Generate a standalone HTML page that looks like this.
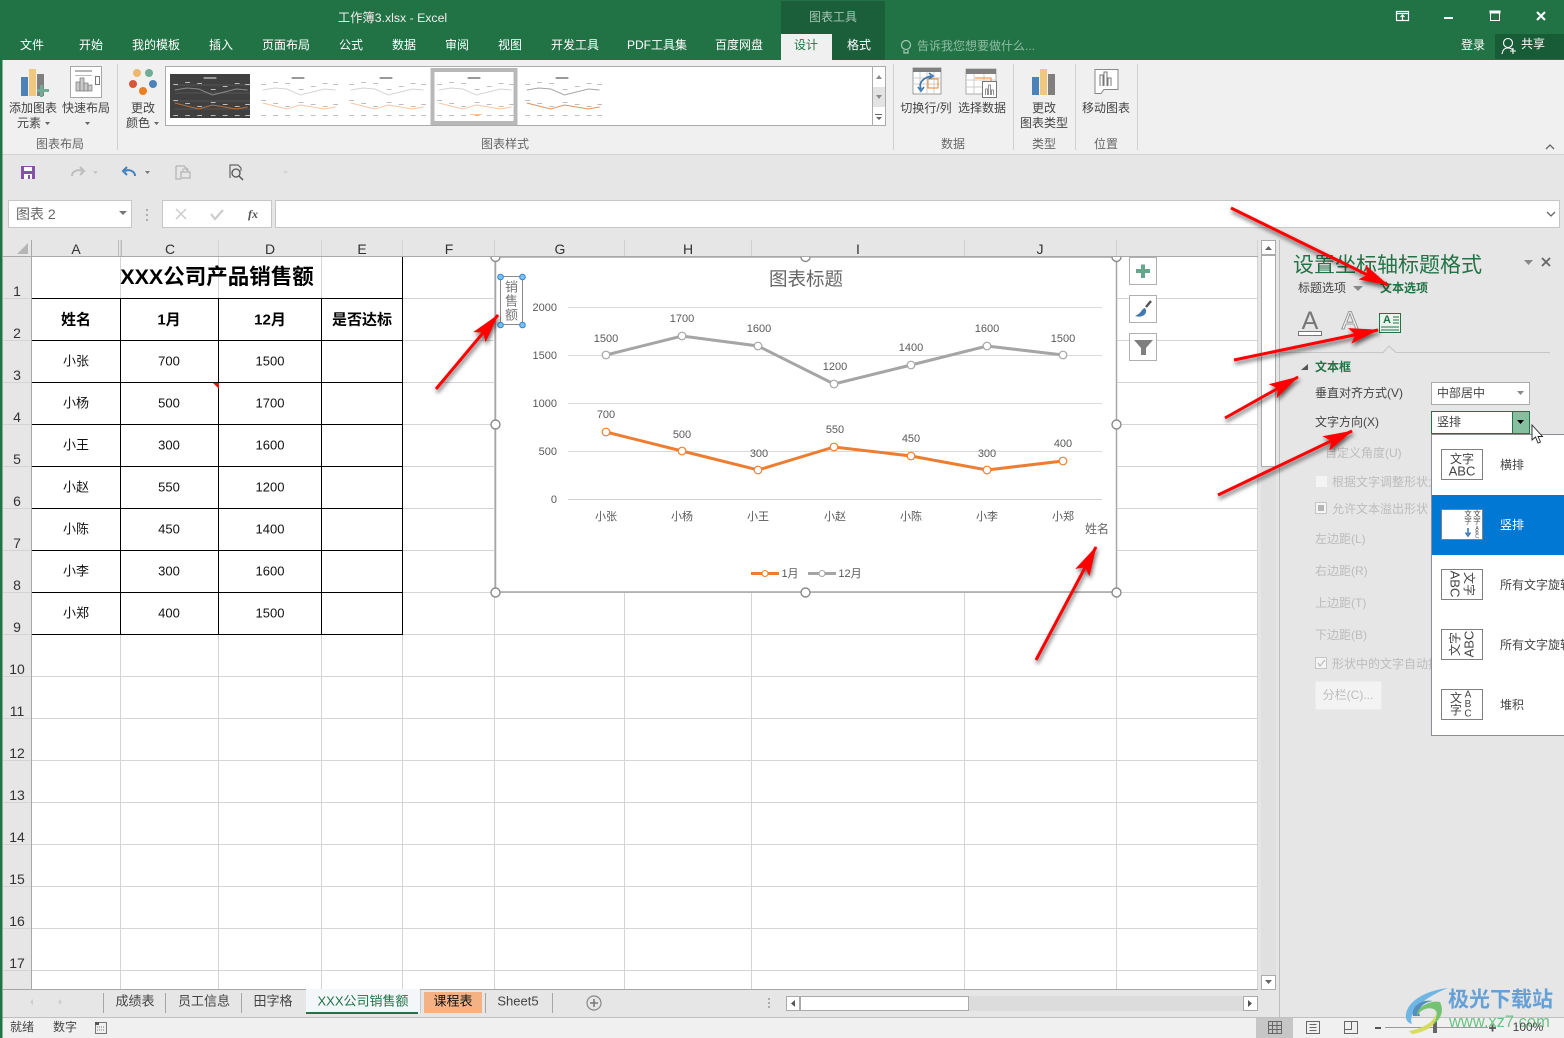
<!DOCTYPE html>
<html lang="zh"><head><meta charset="utf-8"><title>工作簿3.xlsx - Excel</title>
<style>
html,body{margin:0;padding:0;width:1564px;height:1038px;overflow:hidden;background:#fff}
svg{position:absolute;left:0;top:0;font-family:"Liberation Sans","Noto Sans CJK SC",sans-serif;font-size:12px}
text{dominant-baseline:central}
.m{text-anchor:middle}
.e{text-anchor:end}
.w{fill:#fff}
.g{fill:#444}
.l{fill:#666}
.d{fill:#bcbcbc}
.k{fill:#000}
.c{fill:#595959;font-size:11px;transform:translateY(1px)}
.h{fill:#333;font-size:14px}
.b{font-weight:bold;font-size:15px;fill:#000}
.v{font-size:13px;fill:#111}
.gl{stroke:#d4d4d4;stroke-width:1}
.bl{stroke:#000;stroke-width:1;fill:none}
.ic{fill:none;stroke:#7f7f7f}
</style></head><body>
<svg width="1564" height="1038" viewBox="0 0 1564 1038" shape-rendering="geometricPrecision">
<defs>
<marker id="ah" viewBox="0 0 30 16" markerUnits="userSpaceOnUse" markerWidth="30" markerHeight="16" refX="29" refY="8" orient="auto"><path d="M0,0L30,8L0,16L6,8Z" fill="#f00"/></marker>
<filter id="sh" x="-20%" y="-20%" width="140%" height="140%"><feDropShadow dx="1" dy="3" stdDeviation="2" flood-color="#000" flood-opacity=".6"/></filter>
<g id="marks" fill="#bdbdbd">
<rect x="4" y="16" width="6" height="1"/><rect x="19" y="14" width="6" height="1"/><rect x="34" y="15" width="6" height="1"/><rect x="51" y="21" width="6" height="1"/><rect x="66" y="18" width="6" height="1"/><rect x="81" y="15" width="6" height="1"/><rect x="94" y="16" width="6" height="1"/>
<rect x="4" y="32" width="6" height="1"/><rect x="19" y="35" width="6" height="1"/><rect x="34" y="38" width="6" height="1"/><rect x="51" y="34" width="6" height="1"/><rect x="66" y="36" width="6" height="1"/><rect x="81" y="38" width="6" height="1"/><rect x="94" y="36" width="6" height="1"/>
<rect x="4" y="47" width="6" height="1"/><rect x="19" y="47" width="6" height="1"/><rect x="34" y="47" width="6" height="1"/><rect x="51" y="47" width="6" height="1"/><rect x="66" y="47" width="6" height="1"/><rect x="81" y="47" width="6" height="1"/><rect x="94" y="47" width="6" height="1"/>
<rect x="42" y="9" width="16" height="2" fill="#999"/>
</g>
<g id="mini"><polyline points="6,22 21,20 36,21 53,27 68,24 83,21 97,22" fill="none" stroke="#d4d4d4" stroke-width="1"/><polyline points="6,35 21,38 36,41 53,37 68,39 83,41 97,39" fill="none" stroke="#f6c6a4" stroke-width="1"/><use href="#marks"/></g>
</defs>

<!-- backgrounds -->
<rect width="1564" height="1038" fill="#e6e6e6"/>
<rect width="1564" height="60" fill="#217346"/>
<rect x="0" y="60" width="1564" height="94" fill="#f0f0f0"/>
<rect x="0" y="154" width="1564" height="1" fill="#d2d2d2"/>
<rect x="781" y="1" width="104" height="59" fill="#1b5e3a"/>
<rect x="781" y="34" width="51" height="26" fill="#f0f0f0"/>
<rect x="1495" y="34" width="69" height="25" fill="#185c37"/>

<!-- title & tabs -->
<text x="392.500" y="18" class="m" fill="#f0f0f0" style="font-size:12.300px">工作簿3.xlsx - Excel</text>
<text x="833" y="17" class="m" fill="#a5c8b4">图表工具</text>
<g class="w" fill="#fff">
<text x="32" y="45" class="m w">文件</text><text x="91" y="45" class="m w">开始</text><text x="156" y="45" class="m w">我的模板</text><text x="221" y="45" class="m w">插入</text><text x="286" y="45" class="m w">页面布局</text><text x="351" y="45" class="m w">公式</text><text x="404" y="45" class="m w">数据</text><text x="457" y="45" class="m w">审阅</text><text x="510" y="45" class="m w">视图</text><text x="575" y="45" class="m w">开发工具</text><text x="657" y="45" class="m w">PDF工具集</text><text x="739" y="45" class="m w">百度网盘</text><text x="859" y="45" class="m w">格式</text><text x="1473" y="45" class="m w">登录</text><text x="1533" y="44" class="m w">共享</text>
</g>
<text x="806" y="45" class="m" fill="#217346">设计</text>
<text x="917" y="46" fill="#8fbca3">告诉我您想要做什么...</text>
<g fill="none" stroke="#a5c8b4" stroke-width="1.200"><circle cx="906" cy="45" r="4.500"/><path d="M904,50V53H908V50"/></g>
<!-- window buttons -->
<g fill="none" stroke="#fff" stroke-width="1.200"><rect x="1396.500" y="11.500" width="12" height="9"/><path d="M1396,13.500H1409M1402.500,20V15M1400.500,17L1402.500,15L1404.500,17"/></g>
<rect x="1444" y="17" width="9" height="2" fill="#fff"/>
<g fill="none" stroke="#fff"><rect x="1490.500" y="11.500" width="9" height="9"/><rect x="1490" y="11" width="10" height="2" fill="#fff"/></g>
<path d="M1537,12L1545,20M1545,12L1537,20" stroke="#fff" stroke-width="2"/>
<g fill="none" stroke="#fff" stroke-width="1.100"><circle cx="1508" cy="43" r="4.500"/><path d="M1502,54C1503,49 1505,48 1508,48C1510,48 1512,49 1513,50M1510,51H1516M1513,48V54"/></g>

<!-- ribbon: layout group -->
<rect x="21" y="77" width="7" height="19" fill="#4d82b8"/><rect x="29" y="69" width="7" height="27" fill="#f0c77e"/><rect x="37" y="74" width="7" height="22" fill="#7f7f7f"/>
<path d="M40,85H43V89H49V92H43V97H40V92H37V89H40Z" fill="#70ad97"/>
<rect x="70.500" y="66.500" width="31" height="31" fill="#fff" stroke="#a8a8a8"/>
<rect x="75" y="70" width="17" height="2" fill="#b5b5b5"/><rect x="75" y="75" width="17" height="1" fill="#bbb"/><g fill="#c9c9c9" stroke="#777" stroke-width=".7"><rect x="76" y="82" width="4" height="9"/><rect x="80" y="78" width="4" height="13"/><rect x="84" y="83" width="4" height="8"/><rect x="88" y="85" width="4" height="6"/></g><rect x="95.500" y="76.500" width="4" height="8" fill="none" stroke="#777"/>
<text x="33" y="108" class="m g">添加图表</text><text x="29" y="123" class="m g">元素</text><path d="M45,122h5l-2.500,3z" fill="#666"/>
<text x="86" y="108" class="m g">快速布局</text><path d="M85,122h5l-2.500,3z" fill="#666"/>
<text x="60" y="144" class="m l">图表布局</text>
<rect x="117" y="64" width="1" height="86" fill="#d0d0d0"/>
<circle cx="137" cy="73" r="4" fill="#eeb76b"/><circle cx="149" cy="73" r="4" fill="#70ad97"/><circle cx="133" cy="84" r="4" fill="#d9553a"/><circle cx="153" cy="84" r="4" fill="#4d82b8"/><circle cx="143" cy="91" r="4" fill="#e97f22"/>
<text x="143" y="108" class="m g">更改</text><text x="138" y="123" class="m g">颜色</text><path d="M154,122h5l-2.500,3z" fill="#666"/>

<!-- gallery -->
<rect x="165.500" y="66.500" width="720" height="59" fill="#fff" stroke="#ababab"/>
<rect x="170" y="74" width="80" height="44" fill="#404040"/>
<g transform="translate(170,68) scale(.8,1)"><path d="M6,17H100M6,25H100M6,33H100M6,41H100" stroke="#555" fill="none"/><polyline points="6,22 21,20 36,21 53,27 68,24 83,21 97,22" fill="none" stroke="#8a8a8a"/><polyline points="6,35 21,38 36,41 53,37 68,39 83,41 97,39" fill="none" stroke="#b8703c"/><use href="#marks"/></g>
<use href="#mini" transform="translate(258,68) scale(.8,1)"/>
<use href="#mini" transform="translate(346,68) scale(.8,1)"/>
<rect x="432.500" y="70" width="83" height="53" fill="#fff" stroke="#b8b8b8" stroke-width="4"/>
<use href="#mini" transform="translate(434,68) scale(.8,1)"/>
<rect x="470" y="114" width="12" height="1" fill="#f6c6a4"/>
<g transform="translate(522,68) scale(.8,1)"><polyline points="6,22 21,20 36,21 53,27 68,24 83,21 97,22" fill="none" stroke="#a5a5a5"/><polyline points="6,35 21,38 36,41 53,37 68,39 83,41 97,39" fill="none" stroke="#e0915a"/><use href="#marks"/></g>
<rect x="872" y="67" width="1" height="58" fill="#ababab"/>
<rect x="873" y="87" width="12" height="20" fill="#e3e3e3"/>
<path d="M876,79h6l-3,-4zM876,95h6l-3,4z" fill="#8a8a8a"/><path d="M875,114h7v1h-7zM876,117h6l-3,3z" fill="#666"/>
<text x="505" y="144" class="m l">图表样式</text>
<rect x="893" y="64" width="1" height="86" fill="#d0d0d0"/>

<!-- data group -->
<rect x="913" y="68" width="28" height="26" fill="#fff" stroke="#888" stroke-width=".8"/><rect x="913" y="68" width="28" height="4" fill="#7f7f7f"/>
<path d="M920,72V94M927,72V94M934,72V94M913,78H941M913,84H941" stroke="#ccc" fill="none"/><rect x="928" y="79" width="10" height="9" fill="none" stroke="#e9852a"/>
<path d="M921,89C918,82 924,78 931,76M929,73L933,76L929,79M918,87L921,91L924,87" fill="none" stroke="#3f78b3" stroke-width="1.700"/>
<rect x="966" y="69" width="30" height="25" fill="#fff" stroke="#999" stroke-width=".8"/><rect x="966" y="69" width="30" height="5" fill="#7f7f7f"/>
<path d="M974,74V94M984,74V94M966,80H996M966,87H996" stroke="#ccc" fill="none"/><path d="M975,78H991V86" stroke="#e9852a" fill="none"/>
<rect x="982.500" y="81.500" width="14" height="16" fill="#fff" stroke="#777"/><path d="M985.500,95V89h2V95M988.500,95V85h2V95M991.500,95V90h2V95" fill="none" stroke="#777" stroke-width=".8"/>
<text x="926" y="108" class="m g">切换行/列</text><text x="982" y="108" class="m g">选择数据</text><text x="953" y="144" class="m l">数据</text>
<rect x="1013" y="64" width="1" height="86" fill="#d0d0d0"/>
<rect x="1032" y="77" width="7" height="18" fill="#4d82b8"/><rect x="1040" y="69" width="7" height="26" fill="#f0c77e"/><rect x="1048" y="74" width="7" height="21" fill="#7f7f7f"/>
<text x="1044" y="108" class="m g">更改</text><text x="1044" y="123" class="m g">图表类型</text><text x="1044" y="144" class="m l">类型</text>
<rect x="1075" y="64" width="1" height="86" fill="#d0d0d0"/>
<path d="M1095,69.500H1118V89.500H1104L1101,93.500H1095Z" fill="#fff" stroke="#888"/><path d="M1100,86V75h3V86M1104,86V72h3V86M1108,86V78h3V86" fill="none" stroke="#777"/>
<text x="1106" y="108" class="m g">移动图表</text><text x="1106" y="144" class="m l">位置</text>
<rect x="1137" y="64" width="1" height="86" fill="#d0d0d0"/>
<path d="M1546,149l4,-4l4,4" fill="none" stroke="#666" stroke-width="1.300"/>

<!-- QAT -->
<path d="M21,166H35V179H21Z" fill="#8652a8"/><rect x="24" y="167" width="8" height="4" fill="#fff"/><rect x="24" y="174" width="8" height="5" fill="#fff"/><rect x="28" y="175" width="2" height="4" fill="#8652a8"/>
<path d="M72,176C72,171 78,169 82,171M80,167L84,171L80,175" fill="none" stroke="#bdbdbd" stroke-width="2"/><path d="M93,171h5l-2.500,3z" fill="#c4c4c4"/>
<path d="M135,176C135,171 129,169 125,171M127,167L123,171L127,175" fill="none" stroke="#4080bd" stroke-width="2"/><path d="M145,171h5l-2.500,3z" fill="#777"/>
<path d="M176,166H184L187,169V171M176,166V179H181" fill="none" stroke="#b5b5b5" stroke-width="1.300"/><rect x="181" y="172" width="9" height="6" fill="none" stroke="#b5b5b5" stroke-width="1.300"/><rect x="183" y="169" width="5" height="3" fill="none" stroke="#b5b5b5"/>
<path d="M230,178V165H238L241,168V171" fill="none" stroke="#666" stroke-width="1.200"/><circle cx="236" cy="173" r="4" fill="none" stroke="#555" stroke-width="1.300"/><path d="M239,176L243,180" stroke="#555" stroke-width="1.500"/>
<path d="M283,171h5l-2.500,3z" fill="#d2d2d2"/>

<!-- formula bar -->
<rect x="8.500" y="200.500" width="123" height="27" fill="#fff" stroke="#c6c6c6"/>
<text x="16" y="214" fill="#666" style="font-size:14px">图表 2</text><path d="M119,211h8l-4,4z" fill="#777"/>
<path d="M147,209v2M147,214v2M147,219v2" stroke="#999" stroke-width="1.500"/>
<rect x="162.500" y="200.500" width="109" height="27" fill="#fff" stroke="#c6c6c6"/>
<path d="M176,209L186,219M186,209L176,219" stroke="#ccc" stroke-width="1.500"/><path d="M211,214L215,219L223,210" fill="none" stroke="#ccc" stroke-width="2.200"/>
<text x="253" y="214" class="m" style="font:italic bold 12px 'Liberation Serif',serif;fill:#555">fx</text>
<rect x="275.500" y="200.500" width="1284" height="27" fill="#fff" stroke="#c6c6c6"/><path d="M1547,212l4,4l4,-4" fill="none" stroke="#666" stroke-width="1.300"/>

<!-- sheet -->
<rect x="3" y="240" width="1255" height="17" fill="#e6e6e6"/>
<rect x="3" y="257" width="29" height="733" fill="#e6e6e6"/>
<rect x="32" y="257" width="1226" height="733" fill="#fff"/>
<path d="M28,243V254H17Z" fill="#b5b5b5"/>
<g class="gl">
<path d="M120.500,240V989M218.500,240V989M321.500,240V989M402.500,240V989M494.500,240V989M624.500,240V989M751.500,240V989M964.500,240V989M1116.500,240V989M1257.500,240V989" fill="none"/>
<path d="M3,298.500H1258M3,340.500H1258M3,382.500H1258M3,424.500H1258M3,466.500H1258M3,508.500H1258M3,550.500H1258M3,592.500H1258M3,634.500H1258M3,676.500H1258M3,718.500H1258M3,760.500H1258M3,802.500H1258M3,844.500H1258M3,886.500H1258M3,928.500H1258M3,970.500H1258" fill="none"/>
</g>
<path d="M118.500,240V257M121.500,240V257" stroke="#bbb" fill="none"/>
<path d="M3,256.500H1258M31.500,240V990" stroke="#a8a8a8" fill="none"/>
<g class="h"><text x="76" y="249" class="m h">A</text><text x="170" y="249" class="m h">C</text><text x="270" y="249" class="m h">D</text><text x="362" y="249" class="m h">E</text><text x="449" y="249" class="m h">F</text>
<text x="17" y="291" class="m h">1</text><text x="17" y="333" class="m h">2</text><text x="17" y="375" class="m h">3</text><text x="17" y="417" class="m h">4</text><text x="17" y="459" class="m h">5</text><text x="17" y="501" class="m h">6</text><text x="17" y="543" class="m h">7</text><text x="17" y="585" class="m h">8</text><text x="17" y="627" class="m h">9</text><text x="17" y="669" class="m h">10</text><text x="17" y="711" class="m h">11</text><text x="17" y="753" class="m h">12</text><text x="17" y="795" class="m h">13</text><text x="17" y="837" class="m h">14</text><text x="17" y="879" class="m h">15</text><text x="17" y="921" class="m h">16</text><text x="17" y="963" class="m h">17</text></g>

<!-- table -->
<path class="bl" d="M32,298.500H403M32,340.500H403M32,382.500H403M32,424.500H403M32,466.500H403M32,508.500H403M32,550.500H403M32,592.500H403M32,634.500H403M120.500,299V635M218.500,299V635M321.500,299V635M402.500,257V635"/>
<text x="217" y="277" class="m k" style="font-size:21.500px;font-weight:bold">XXX公司产品销售额</text>
<text x="76" y="320" class="m b">姓名</text><text x="169" y="320" class="m b">1月</text><text x="270" y="320" class="m b">12月</text><text x="362" y="320" class="m b">是否达标</text>
<text x="76" y="361" class="m v">小张</text><text x="169" y="361" class="m v">700</text><text x="270" y="361" class="m v">1500</text>
<text x="76" y="403" class="m v">小杨</text><text x="169" y="403" class="m v">500</text><text x="270" y="403" class="m v">1700</text>
<text x="76" y="445" class="m v">小王</text><text x="169" y="445" class="m v">300</text><text x="270" y="445" class="m v">1600</text>
<text x="76" y="487" class="m v">小赵</text><text x="169" y="487" class="m v">550</text><text x="270" y="487" class="m v">1200</text>
<text x="76" y="529" class="m v">小陈</text><text x="169" y="529" class="m v">450</text><text x="270" y="529" class="m v">1400</text>
<text x="76" y="571" class="m v">小李</text><text x="169" y="571" class="m v">300</text><text x="270" y="571" class="m v">1600</text>
<text x="76" y="613" class="m v">小郑</text><text x="169" y="613" class="m v">400</text><text x="270" y="613" class="m v">1500</text>
<path d="M213,383H219V389Z" fill="#e3170d"/>

<!-- chart -->
<rect x="495.500" y="257" width="621" height="335" fill="#fff" stroke="#a6a6a6" stroke-width="1.500"/>
<path d="M568,307.500H1102M568,355.500H1102M568,403.500H1102M568,451.500H1102" stroke="#d9d9d9" fill="none"/><path d="M568,499.500H1102" stroke="#d0d0d0" fill="none"/>
<text x="806" y="279" class="m" style="font-size:18.500px;fill:#666">图表标题</text>
<text x="557" y="307" class="e c">2000</text><text x="557" y="355" class="e c">1500</text><text x="557" y="403" class="e c">1000</text><text x="557" y="451" class="e c">500</text><text x="557" y="499" class="e c">0</text>
<polyline points="606,355 682,336 758,346 834,384 911,365 987,346 1063,355" fill="none" stroke="#a5a5a5" stroke-width="3"/>
<polyline points="606,432 682,451 758,470 834,447 911,456 987,470 1063,461" fill="none" stroke="#ed7d31" stroke-width="3"/>
<g fill="#fff" stroke="#a5a5a5" stroke-width="1.200"><circle cx="606" cy="355" r="3.800"/><circle cx="682" cy="336" r="3.800"/><circle cx="758" cy="346" r="3.800"/><circle cx="834" cy="384" r="3.800"/><circle cx="911" cy="365" r="3.800"/><circle cx="987" cy="346" r="3.800"/><circle cx="1063" cy="355" r="3.800"/></g>
<g fill="#fff" stroke="#ed7d31" stroke-width="1.200"><circle cx="606" cy="432" r="3.800"/><circle cx="682" cy="451" r="3.800"/><circle cx="758" cy="470" r="3.800"/><circle cx="834" cy="447" r="3.800"/><circle cx="911" cy="456" r="3.800"/><circle cx="987" cy="470" r="3.800"/><circle cx="1063" cy="461" r="3.800"/></g>
<text x="606" y="338" class="m c">1500</text><text x="682" y="318" class="m c">1700</text><text x="759" y="328" class="m c">1600</text><text x="835" y="366" class="m c">1200</text><text x="911" y="347" class="m c">1400</text><text x="987" y="328" class="m c">1600</text><text x="1063" y="338" class="m c">1500</text>
<text x="606" y="414" class="m c">700</text><text x="682" y="434" class="m c">500</text><text x="759" y="453" class="m c">300</text><text x="835" y="429" class="m c">550</text><text x="911" y="438" class="m c">450</text><text x="987" y="453" class="m c">300</text><text x="1063" y="443" class="m c">400</text>
<text x="606" y="516" class="m c">小张</text><text x="682" y="516" class="m c">小杨</text><text x="758" y="516" class="m c">小王</text><text x="835" y="516" class="m c">小赵</text><text x="911" y="516" class="m c">小陈</text><text x="987" y="516" class="m c">小李</text><text x="1063" y="516" class="m c">小郑</text>
<text x="1097" y="529" class="m" style="fill:#666">姓名</text>
<path d="M751,573.500H779" stroke="#ed7d31" stroke-width="3"/><circle cx="765" cy="573.500" r="3" fill="#fff" stroke="#ed7d31"/><text x="790" y="573" class="m c">1月</text>
<path d="M808,573.500H836" stroke="#a5a5a5" stroke-width="3"/><circle cx="822" cy="573.500" r="3" fill="#fff" stroke="#a5a5a5"/><text x="850" y="573" class="m c">12月</text>
<!-- axis title selection -->
<rect x="500.500" y="276.500" width="22" height="48" fill="#fff" stroke="#8a8a8a"/>
<text x="511.500" y="287" class="m" style="fill:#777;font-size:13px">销</text><text x="511.500" y="301" class="m" style="fill:#777;font-size:13px">售</text><text x="511.500" y="315" class="m" style="fill:#777;font-size:13px">额</text>
<g fill="#7cc0f0" stroke="#2e86d4"><circle cx="500.500" cy="277" r="2.800"/><circle cx="522.500" cy="277" r="2.800"/><circle cx="500.500" cy="325" r="2.800"/><circle cx="522.500" cy="325" r="2.800"/></g>
<!-- handles -->
<g fill="#fff" stroke="#8a8a8a" stroke-width="1.400"><circle cx="495.500" cy="257" r="4.500"/><circle cx="805.500" cy="257" r="4.500"/><circle cx="1116.500" cy="257" r="4.500"/><circle cx="495.500" cy="424.500" r="4.500"/><circle cx="1116.500" cy="424.500" r="4.500"/><circle cx="495.500" cy="592.500" r="4.500"/><circle cx="805.500" cy="592.500" r="4.500"/><circle cx="1116.500" cy="592.500" r="4.500"/></g>
<rect x="490" y="240" width="632" height="16.500" fill="#e6e6e6"/><path d="M494.500,240V256M624.500,240V256M751.500,240V256M964.500,240V256M1116.500,240V256" stroke="#d0d0d0" fill="none"/><path d="M490,256.500H1122" stroke="#a8a8a8"/>
<text x="560" y="249" class="m h">G</text><text x="688" y="249" class="m h">H</text><text x="858" y="249" class="m h">I</text><text x="1040" y="249" class="m h">J</text>
<!-- chart side buttons -->
<g fill="#fff" stroke="#b0b0b0"><rect x="1129.500" y="257.500" width="27" height="27"/><rect x="1129.500" y="295.500" width="27" height="27"/><rect x="1129.500" y="333.500" width="27" height="27"/></g>
<path d="M1141,264.500H1145V269H1150V273H1145V278H1141V273H1136V269H1141Z" fill="#66a68c"/>
<path d="M1151,301L1146,307" stroke="#555" stroke-width="2.500"/><path d="M1145,308C1141,309 1142,313 1135,316C1141,318 1147,315 1146,310Z" fill="#3f78b3"/>
<path d="M1134,340H1153L1146,348V355H1141V348Z" fill="#7f7f7f"/>

<!-- scrollbar -->
<rect x="1261" y="240" width="15" height="750" fill="#e0e0e0"/>
<rect x="1261.500" y="240.500" width="14" height="14" fill="#fff" stroke="#aaa"/><path d="M1265,250h7l-3.500,-4z" fill="#666"/>
<rect x="1261.500" y="255.500" width="14" height="211" fill="#fff" stroke="#aaa"/>
<rect x="1261.500" y="975.500" width="14" height="14" fill="#fff" stroke="#aaa"/><path d="M1265,980h7l-3.500,4z" fill="#666"/>
<rect x="1279" y="240" width="1" height="778" fill="#bdbdbd"/>
<rect x="1258" y="240" width="3" height="750" fill="#e6e6e6"/>

<!-- format pane -->
<text x="1293" y="265.500" fill="#217346" style="font-size:21px">设置坐标轴标题格式</text>
<path d="M1524,260h9l-4.500,5z" fill="#888"/><path d="M1542,258L1550,266M1550,258L1542,266" stroke="#666" stroke-width="1.800"/>
<text x="1298" y="288" class="g">标题选项</text><path d="M1353,286h10l-5,5z" fill="#888"/>
<text x="1380" y="288" fill="#217346" style="font-weight:bold">文本选项</text>
<text x="1310" y="321" class="m" style="font-size:25px;fill:#777">A</text><rect x="1298.500" y="331.500" width="23" height="4" fill="#fff" stroke="#777"/>
<text x="1350" y="321" class="m" style="font-size:25px;fill:#f0f0f0;stroke:#888;stroke-width:.8">A</text>
<rect x="1379.500" y="313.500" width="21" height="19" fill="#eaf3ee" stroke="#217346"/>
<text x="1387" y="320" class="m" style="font-size:11px;fill:#217346;font-weight:bold">A</text><path d="M1393,317H1399M1393,320H1399M1393,323H1399M1381,327H1399M1381,330H1399" stroke="#217346" fill="none"/>
<path d="M1280,352.500H1383L1389,346L1396,352.500H1550" fill="none" stroke="#c6c6c6"/>
<path d="M1301,370h7v-6z" fill="#555"/>
<text x="1315" y="367" fill="#217346" style="font-weight:bold">文本框</text>
<text x="1315" y="393" class="g">垂直对齐方式(V)</text>
<rect x="1431.500" y="382.500" width="98" height="22" fill="#fff" stroke="#ababab"/><text x="1437" y="393" class="g">中部居中</text><path d="M1517,391h7l-3.500,4z" fill="#888"/>
<text x="1315" y="422" class="g">文字方向(X)</text>
<rect x="1431.500" y="411.500" width="98" height="22" fill="#fff" stroke="#217346"/><text x="1437" y="422" class="g">竖排</text>
<rect x="1512.500" y="411.500" width="17" height="22" fill="#86bfa0" stroke="#217346"/><path d="M1517,420h7l-3.500,4z" fill="#000"/>
<text x="1325" y="453" class="d">自定义角度(U)</text>
<rect x="1316" y="476" width="11" height="11" fill="#f4f4f4"/><text x="1332" y="482" class="d">根据文字调整形状大小</text>
<rect x="1315.500" y="502.500" width="11" height="11" fill="#f4f4f4" stroke="#c6c6c6"/><rect x="1318" y="505" width="6" height="6" fill="#b5b5b5"/><text x="1332" y="509" class="d">允许文本溢出形状</text>
<text x="1315" y="539" class="d">左边距(L)</text><text x="1315" y="571" class="d">右边距(R)</text><text x="1315" y="603" class="d">上边距(T)</text><text x="1315" y="635" class="d">下边距(B)</text>
<rect x="1315.500" y="657.500" width="11" height="11" fill="#f4f4f4" stroke="#c6c6c6"/><path d="M1318,663L1320,666L1325,660" fill="none" stroke="#bbb" stroke-width="1.200"/><text x="1332" y="664" class="d">形状中的文字自动换行</text>
<rect x="1315.500" y="681.500" width="66" height="28" fill="#f3f3f3"/><text x="1348" y="695" class="m d">分栏(C)...</text>

<!-- dropdown -->
<rect x="1431.500" y="434.500" width="140" height="301" fill="#fff" stroke="#8c8c94"/>
<rect x="1432" y="495" width="132" height="60" fill="#0078d4"/>
<g fill="#fff" stroke="#808080"><rect x="1441.500" y="449.500" width="41" height="30"/><rect x="1441.500" y="509.500" width="41" height="30"/><rect x="1441.500" y="569.500" width="41" height="30"/><rect x="1441.500" y="629.500" width="41" height="30"/><rect x="1441.500" y="689.500" width="41" height="30"/></g>
<text x="1462" y="459" class="m" style="fill:#444">文字</text><text x="1462" y="471" class="m" style="font-size:13px;fill:#444">ABC</text>
<text x="1512" y="465" class="m g">横排</text>
<g style="font-size:7.500px;fill:#444"><text x="1468" y="514" class="m">文</text><text x="1468" y="521" class="m">字</text><text x="1477" y="514" class="m">文</text><text x="1477" y="521" class="m">字</text><text x="1477" y="529" class="m" style="font-size:5px">A</text><text x="1477" y="533" class="m" style="font-size:5px">B</text><text x="1477" y="537" class="m" style="font-size:5px">C</text></g>
<path d="M1468,528V534M1465.500,532.500L1468,536L1470.500,532.500" stroke="#3f78b3" stroke-width="1.600" fill="none"/>
<text x="1512" y="525" class="m w">竖排</text>
<g transform="translate(1462,584) rotate(90)"><text x="0" y="-7" class="m" style="fill:#444">文字</text><text x="0" y="7" class="m" style="font-size:13px;fill:#444">ABC</text></g>
<text x="1500" y="585" class="g">所有文字旋转90°</text>
<g transform="translate(1462,644) rotate(-90)"><text x="0" y="-7" class="m" style="fill:#444">文字</text><text x="0" y="7" class="m" style="font-size:13px;fill:#444">ABC</text></g>
<text x="1500" y="645" class="g">所有文字旋转270°</text>
<text x="1456" y="698" class="m" style="fill:#444">文</text><text x="1456" y="710" class="m" style="fill:#444">字</text>
<text x="1468" y="695" class="m" style="font-size:10px;fill:#444">A</text><text x="1468" y="704.500" class="m" style="font-size:10px;fill:#444">B</text><text x="1468" y="714" class="m" style="font-size:10px;fill:#444">C</text>
<text x="1512" y="705" class="m g">堆积</text>
<rect x="1432" y="735" width="132" height="1" fill="#8c8c94"/>
<!-- cursor -->
<path d="M1532,425V440L1535.500,437L1538,443L1540.500,442L1538,436.500H1542.500Z" fill="#fff" stroke="#222" stroke-width=".9"/>

<!-- tabs -->
<rect x="3" y="990" width="1276" height="28" fill="#e6e6e6"/>
<rect x="0" y="1017" width="1564" height="1" fill="#c0c0c0"/>
<path d="M3,989.500H306M420,989.500H1258" stroke="#a6a6a6" fill="none"/>
<path d="M33,999v6l-3,-3zM59,999v6l3,-3z" fill="#ccc"/>
<path d="M84.500,993V1013" stroke="none" fill="none"/>
<path d="M103.500,993V1013M165.500,993V1013M241.500,993V1013M306.500,993V1013M420,990V1013M485.500,993V1013M552.500,993V1013" stroke="#a6a6a6" fill="none"/>
<text x="135" y="1001" class="m" style="font-size:13px;fill:#444">成绩表</text>
<text x="204" y="1001" class="m" style="font-size:13px;fill:#444">员工信息</text>
<text x="273" y="1001" class="m" style="font-size:13px;fill:#444">田字格</text>
<rect x="306" y="989" width="114" height="24" fill="#f3f7fa"/>
<rect x="306" y="1012" width="112" height="2" fill="#217346"/>
<text x="363" y="1001" class="m" style="font-size:13px;fill:#217346">XXX公司销售额</text>
<rect x="424" y="992" width="58" height="21" fill="#f4b183"/>
<text x="453" y="1001" class="m" style="font-size:13px;fill:#111">课程表</text>
<text x="518" y="1001" class="m" style="font-size:13px;fill:#444">Sheet5</text>
<circle cx="594" cy="1003" r="7" fill="none" stroke="#888" stroke-width="1.200"/><path d="M590,1003H598M594,999V1007" stroke="#777" stroke-width="1.500"/>
<path d="M769,998v2M769,1002v2M769,1006v2" stroke="#999" stroke-width="1.500"/>
<!-- h scrollbar -->
<rect x="786" y="996" width="472" height="15" fill="#dcdcdc"/>
<rect x="786.500" y="996.500" width="13" height="14" fill="#fff" stroke="#aaa"/><path d="M795,1000v7l-4,-3.500z" fill="#555"/>
<rect x="800.500" y="996.500" width="168" height="14" fill="#fff" stroke="#aaa"/>
<rect x="1243.500" y="996.500" width="14" height="14" fill="#fff" stroke="#aaa"/><path d="M1248,1000v7l4,-3.500z" fill="#555"/>

<!-- status -->
<rect x="0" y="1018" width="1564" height="20" fill="#f0f0f0"/>
<text x="22" y="1027" class="m g">就绪</text><text x="65" y="1027" class="m g">数字</text>
<rect x="95.500" y="1022.500" width="11" height="11" fill="none" stroke="#777"/><rect x="95" y="1022" width="4" height="3" fill="#555"/><path d="M97,1027h7M97,1030h7" stroke="#777" stroke-dasharray="1 1"/>
<rect x="1256" y="1018" width="37" height="20" fill="#c6c6c6"/>
<path d="M1268.500,1021.500H1281.500V1033.500H1268.500ZM1272.500,1021.500V1033.500M1277,1021.500V1033.500M1268.500,1025.500H1281.500M1268.500,1029.500H1281.500" fill="none" stroke="#666"/>
<path d="M1306.500,1021.500H1319.500V1033.500H1306.500ZM1309.500,1024.500H1316.500M1309.500,1027.500H1316.500M1309.500,1030.500H1316.500" fill="none" stroke="#666"/>
<path d="M1344.500,1033.500V1021.500H1357.500V1033.500ZM1344.500,1029.500H1351.500V1021.500" fill="none" stroke="#666"/>
<rect x="1375" y="1027" width="6" height="2" fill="#555"/><rect x="1385" y="1027" width="103" height="1" fill="#999"/><rect x="1433" y="1021" width="4" height="12" fill="#666"/>
<path d="M1489,1028h7M1492.500,1024.500v7" stroke="#555" stroke-width="1.800"/>

<!-- watermark -->
<g opacity=".92">
<path d="M1448,988C1428,990 1408,1000 1406,1014C1405,1020 1408,1023 1412,1024C1408,1015 1418,1000 1448,988Z" fill="#66b2e4"/>
<path d="M1413,1016C1411,1006 1422,999 1433,1001C1424,1002 1417,1008 1420,1016Z" fill="#4a86bd"/>
<path d="M1440,1002C1432,1000 1416,1006 1417,1016C1421,1008 1432,1006 1436,1011C1440,1018 1428,1025 1412,1032C1430,1031 1448,1018 1440,1002Z" fill="#6cc06a"/>
<path d="M1436,1013C1434,1022 1424,1028 1409,1031L1412,1034C1428,1032 1438,1024 1436,1013Z" fill="#d7dc56"/>
<text x="1448" y="1000" style="font-size:21px;font-weight:bold;fill:#5b9bd5">极光下载站</text>
<text x="1449" y="1022" style="font-size:16.500px;fill:#62c07d">www.xz7.com</text>
</g>
<text x="1528" y="1027" class="m" style="fill:#444">100%</text>

<!-- arrows -->
<g stroke="#f00" stroke-width="3" fill="none" filter="url(#sh)">
<line x1="1231" y1="208" x2="1388" y2="285" marker-end="url(#ah)"/>
<line x1="1234" y1="360" x2="1378" y2="330" marker-end="url(#ah)"/>
<line x1="1225" y1="418" x2="1298" y2="377" marker-end="url(#ah)"/>
<line x1="1218" y1="495" x2="1352" y2="431" marker-end="url(#ah)"/>
<line x1="436" y1="389" x2="498" y2="315" marker-end="url(#ah)"/>
<line x1="1036" y1="660" x2="1096" y2="547" marker-end="url(#ah)"/>
</g>
<rect x="0" y="0" width="2.500" height="1038" fill="#217346"/>
</svg>
</body></html>
